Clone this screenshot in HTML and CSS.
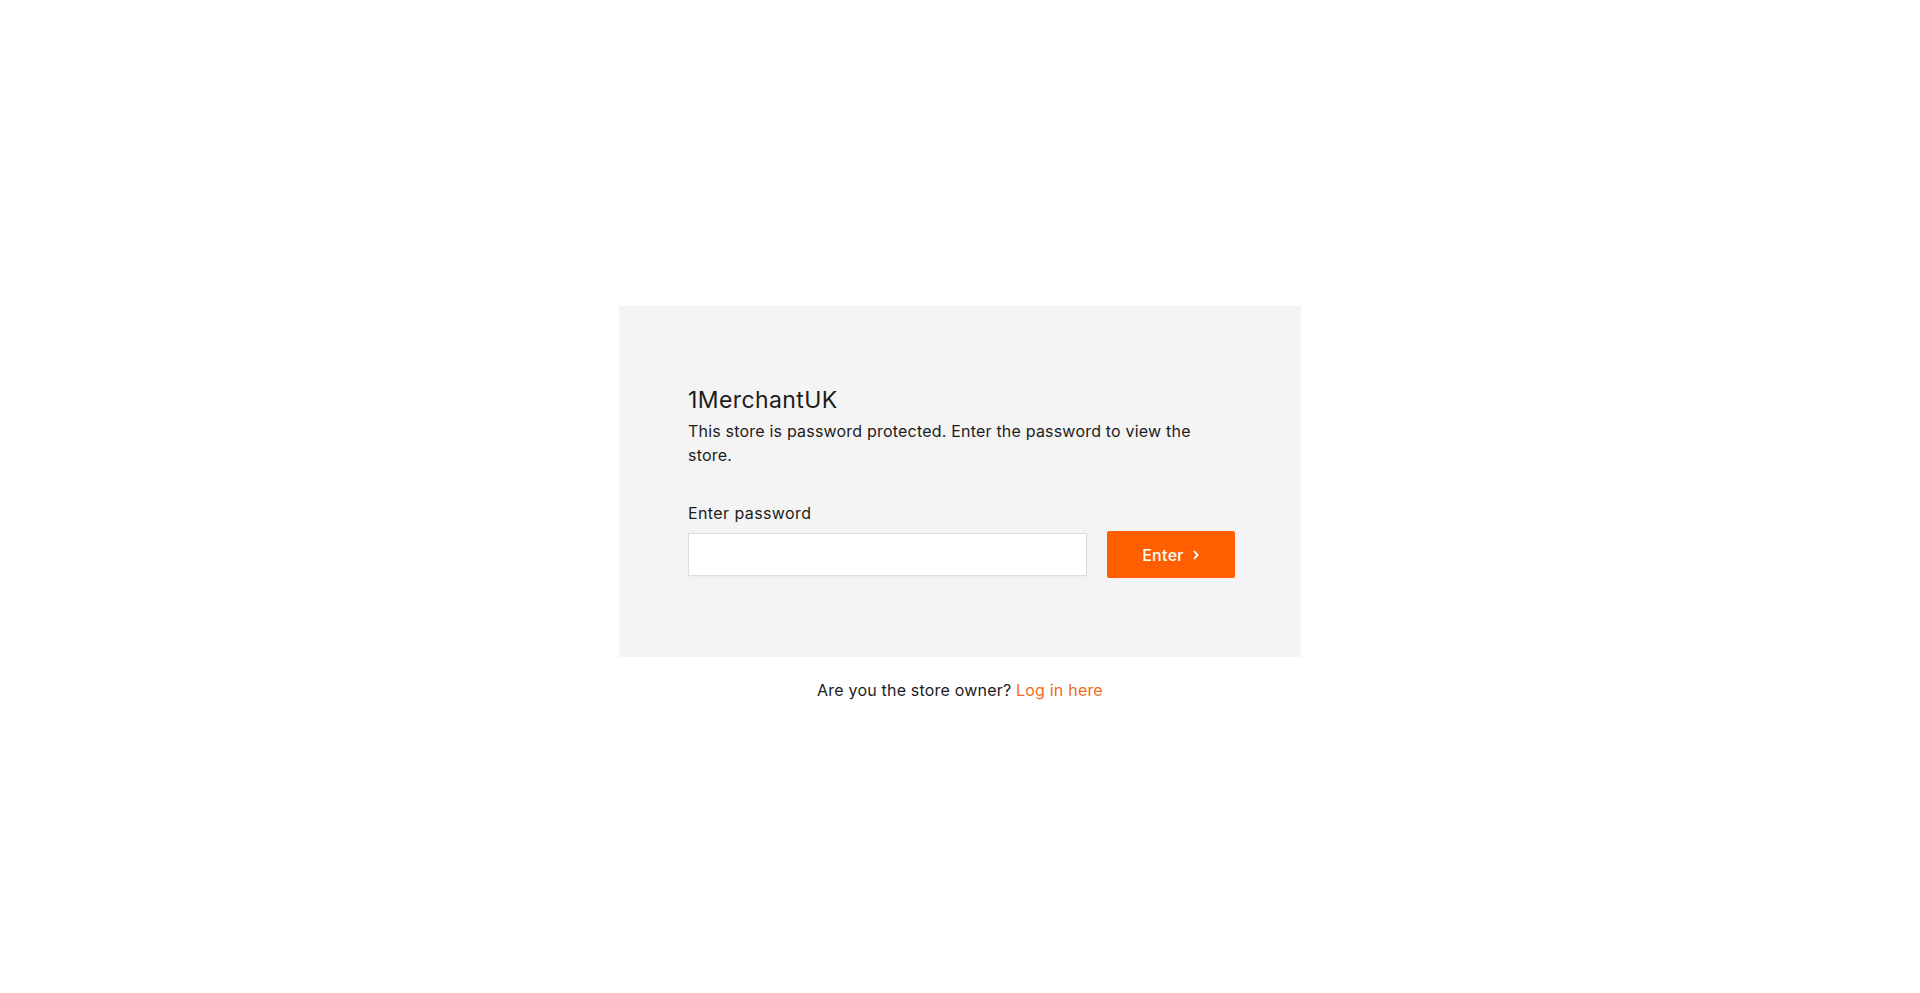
FILE: index.html
```html
<!DOCTYPE html>
<html lang="en">
<head>
<meta charset="utf-8">
<title>1MerchantUK</title>
<link rel="stylesheet" href="styles.css">
</head>
<body>
<main class="page">
  <section class="card">
    <h1 class="title">1MerchantUK</h1>
    <p class="desc">This store is password protected. Enter the password to view the store.</p>
    <form class="form">
      <label class="label" for="pw">Enter password</label>
      <div class="row">
        <input class="input" id="pw" type="password">
        <button class="btn" type="button">Enter <svg class="chev" width="8" height="10" viewBox="0 0 8 10"><path d="M2.4 1.6 L5.6 5 L2.4 8.4" fill="none" stroke="#fff" stroke-width="1.9" stroke-linecap="round" stroke-linejoin="round"/></svg></button>
      </div>
    </form>
  </section>
  <p class="owner">Are you the store owner? <a class="link" href="#">Log in here</a></p>
</main>
</body>
</html>
```

FILE: styles.css
```css
html, body {
  margin: 0;
  padding: 0;
  background: #ffffff;
}
body {
  font-family: "Inter", "Open Sans", sans-serif;
  color: #1c1c1c;
  height: 993px;
}
.page {
  display: flex;
  flex-direction: column;
  align-items: center;
  padding-top: 306px;
}
.card {
  box-sizing: border-box;
  width: 682px;
  background: #f4f4f4;
  padding: 80px 66px 79px 69px;
}
.title {
  margin: 0;
  font-size: 23px;
  font-weight: 400;
  line-height: 28px;
  letter-spacing: 0.4px;
}
.desc {
  margin: 5px 0 0;
  font-size: 16px;
  line-height: 24px;
  letter-spacing: 0.2px;
  padding-right: 20px;
}
.form {
  margin-top: 34px;
}
.label {
  display: block;
  font-size: 16px;
  line-height: 24px;
  letter-spacing: 0.4px;
}
.row {
  display: flex;
  align-items: center;
  gap: 20px;
  margin-top: 6px;
}
.input {
  flex: 1;
  box-sizing: border-box;
  height: 43px;
  border: 1px solid #dcdcdc;
  background: #fff;
  border-radius: 0;
  margin: 0;
  padding: 0 12px;
  box-shadow: 0 1px 3px rgba(0,0,0,0.04);
}
.btn {
  box-sizing: border-box;
  width: 128px;
  height: 47px;
  background: #ff5f00;
  color: #fff;
  border: none;
  border-radius: 2px;
  font-family: inherit;
  font-size: 16px;
  font-weight: 500;
  letter-spacing: 0.3px;
  display: flex;
  align-items: center;
  justify-content: center;
  gap: 8px;
  padding: 0;
}
.chev {
  display: block;
  margin-top: 1px;
}
.owner {
  margin: 21px 0 0;
  font-size: 16px;
  line-height: 24px;
  letter-spacing: 0.2px;
}
.link {
  color: #f26a21;
  text-decoration: none;
}
```
